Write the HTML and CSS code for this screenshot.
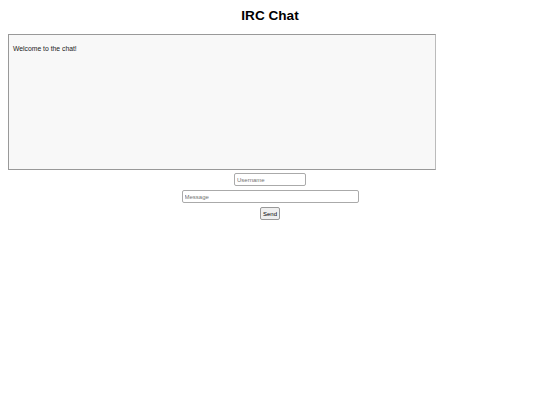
FILE: index.html
```html
<!DOCTYPE html>
<html>
<head>
    <title>IRC Chat</title>
    <link rel="stylesheet" href="styles.css">
</head>
<body>
    <h1 class="title">IRC Chat</h1>

    <div class="chat-box" id="chat">
        <p class="chat-line">Welcome to the chat!</p>
    </div>

    <form class="chat-form" id="chatForm">
        <input type="text" class="username-input" id="username" placeholder="Username">
        <input type="text" class="message-input" id="message" placeholder="Message">
        <button type="submit" class="send-button">Send</button>
    </form>
</body>
</html>
```
FILE: styles.css
```css
body {
    font-family: "Liberation Sans", Arial, sans-serif;
    margin: 8px;
    color: #000;
    background-color: #fff;
}
.title {
    font-size: 13.6px;
    text-align: center;
    margin: 0 0 10px 0;
    line-height: 16px;
}
.chat-box {
    width: 426px;
    height: 134px;
    background-color: #f8f8f8;
    border: 1px solid #999;
    border-right-color: #bbb;
    overflow-y: auto;
}
.chat-line {
    font-size: 6.8px;
    color: #222;
    margin: 10px 4px;
}
.chat-form {
    display: flex;
    flex-direction: column;
    align-items: center;
    gap: 4px;
    margin-top: 3px;
}
.username-input, .message-input {
    font-family: "Liberation Sans", Arial, sans-serif;
    font-size: 6px;
    height: 13px;
    box-sizing: border-box;
    padding: 0 2px;
    border: 1px solid #aaa;
    border-radius: 2px;
    background-color: #fff;
}
.username-input {
    width: 72px;
}
.message-input {
    width: 177px;
}
.send-button {
    font-family: "Liberation Sans", Arial, sans-serif;
    font-size: 6px;
    height: 13px;
    width: 20px;
    padding: 0;
    border: 1px solid #999;
    border-radius: 2px;
    background-color: #efefef;
}
```
